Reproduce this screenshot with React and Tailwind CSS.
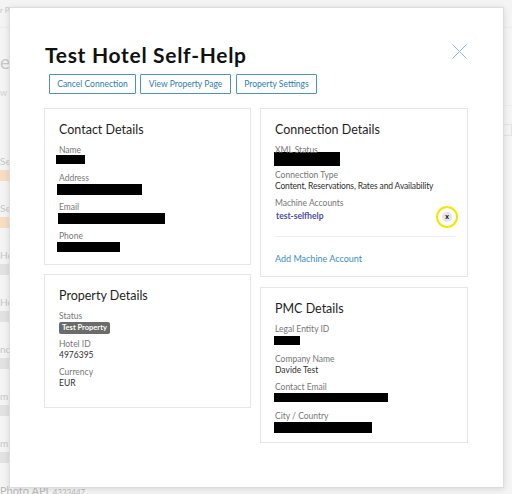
function Label({ children }) {
  return <div className="text-[8.5px] leading-[10px] text-[#767676]">{children}</div>;
}

function Field({ label, children }) {
  return (
    <div className="mb-[6px]">
      <Label>{label}</Label>
      <div className="h-[12px] text-[8.5px] leading-[12px] text-[#2e2e2e]">{children}</div>
    </div>
  );
}

function Redact({ className }) {
  return <div className={"bg-black " + className} />;
}

function Card({ title, className, children }) {
  return (
    <div className={"border border-[#e6e6e6] bg-white pl-[14px] pr-[12px] pt-[13px] " + className}>
      <h3 className="mb-[6.5px] text-[12.5px] leading-[16px] text-[#1e1e1e]">{title}</h3>
      {children}
    </div>
  );
}

function BgRow({ name, badge, orange }) {
  return (
    <div className="mb-[21px]">
      <div className="h-[12px] text-[10px] leading-[12px] text-[#c6c6c6]">{name}</div>
      <div
        className={
          "mt-[3px] flex h-[11px] w-[24px] items-center pl-[12px] text-[8px] text-white " +
          (orange ? "bg-[#f8dcc4]" : "bg-[#e2e2e2]")
        }
      >
        {badge}
      </div>
    </div>
  );
}

function Background() {
  return (
    <div className="flex h-full w-full">
      <div className="w-[40px] overflow-hidden">
        <div className="mt-[5px] text-[8px] leading-[10px] text-[#c4c4c4]">r P</div>
        <div className="mt-[12px] border-t border-[#ececec]" />
        <div className="mt-[24px] text-[19px] leading-[20px] text-[#c9c9c9]">es</div>
        <div className="mt-[16px] text-[9px] leading-[10px] text-[#d0d0d0]">w</div>
        <div className="mt-[57px]">
          <BgRow name="Sel" badge="P" orange />
          <BgRow name="Sel" badge="P" orange />
          <BgRow name="Ho" badge="X" />
          <BgRow name="Ho" badge="X" />
          <BgRow name="nc" badge="X" />
          <BgRow name="m" badge="X" />
          <BgRow name="m" badge="X" />
        </div>
      </div>
      <div className="ml-auto w-[40px] overflow-hidden">
        <div className="mt-[27px] border-t border-[#ececec]" />
        <div className="mt-[77px] border-t border-[#ececec]" />
        <div className="ml-[2px] mt-[18px] h-[12px] border border-[#e4e4e4] pl-[1px] text-[8px] leading-[10px] text-[#c4c4c4]">
          e C
        </div>
      </div>
    </div>
  );
}

export default function App() {
  return (
    <div className="relative h-[494px] w-[512px] overflow-hidden bg-[#f4f4f4] font-['Lato',sans-serif]">
      <Background />

      <div className="absolute left-0 top-[483px] whitespace-nowrap leading-[11px] text-[#b9b9b9]">
        <span className="text-[11px]">Photo API</span>{" "}
        <span className="text-[8px]">4333447</span>
      </div>

      {/* modal */}
      <div className="absolute left-[9px] top-[7px] h-[481px] w-[495px] border border-[#dddddd] bg-white pl-[34px] pr-[34px] pt-[34px] shadow-[0_1px_6px_rgba(0,0,0,0.12)]">
        <div className="mr-[2px] flex h-[26px] items-start justify-between">
          <h1 className="ml-px text-[21px] font-bold leading-[26px] tracking-[0.7px] text-[#111]">
            Test Hotel Self-Help
          </h1>
          <svg className="mt-[2px] h-[15px] w-[15px]" viewBox="0 0 15 15" fill="none">
            <path d="M0.5 0.5 L14.5 14.5 M14.5 0.5 L0.5 14.5" stroke="#8dbcd8" strokeWidth="1" />
          </svg>
        </div>

        <div className="ml-[5px] mt-[6px] flex gap-[4px] text-[8.5px] text-[#2d7dab]">
          <button className="h-[20px] w-[87px] rounded-[1px] border border-[#4f93b6]">Cancel Connection</button>
          <button className="h-[20px] w-[91px] rounded-[1px] border border-[#4f93b6]">View Property Page</button>
          <button className="ml-px h-[20px] w-[81px] rounded-[1px] border border-[#4f93b6]">Property Settings</button>
        </div>

        <div className="mt-[14px] flex gap-[9px]">
          <div className="flex w-[207px] flex-col gap-[9px]">
            <Card title="Contact Details" className="h-[157px]">
              <Field label="Name">
                <Redact className="-ml-[3px] h-[9px] w-[29px]" />
              </Field>
              <Field label="Address">
                <Redact className="-ml-[2px] mt-[1px] h-[11px] w-[85px]" />
              </Field>
              <Field label="Email">
                <Redact className="-ml-[1px] mt-[1px] h-[11px] w-[107px]" />
              </Field>
              <Field label="Phone">
                <Redact className="-ml-[2px] mt-[1px] h-[10px] w-[63px]" />
              </Field>
            </Card>

            <Card title="Property Details" className="h-[134px]">
              <Field label="Status">
                <span className="inline-block h-[12px] rounded-[2px] bg-[#6b6b6b] px-[3px] text-[7.5px] font-bold leading-[12px] text-white">
                  Test Property
                </span>
              </Field>
              <Field label="Hotel ID">4976395</Field>
              <Field label="Currency">EUR</Field>
            </Card>
          </div>

          <div className="flex w-[208px] flex-col gap-[10px]">
            <Card title="Connection Details" className="h-[169px]">
              <Field label="XML Status">
                <Redact className="-ml-[1px] -mt-[3px] h-[14px] w-[66px]" />
              </Field>
              <Field label="Connection Type">
                <span className="tracking-[-0.15px]">Content, Reservations, Rates and Availability</span>
              </Field>
              <Label>Machine Accounts</Label>
              <div className="-mt-[2px] flex h-[22px] items-center justify-between">
                <span className="ml-px text-[8.5px] font-bold text-[#4b4ba3]">test-selfhelp</span>
                <span className="-mr-[3px] flex h-[22px] w-[22px] items-center justify-center rounded-full border-[2.5px] border-[#f4e600]">
                  <span className="flex h-[10px] w-[10px] items-center justify-center rounded-full bg-[#e4e4e4] text-[7px] font-bold leading-none text-black">
                    x
                  </span>
                </span>
              </div>
              <div className="mt-[8px] border-t border-[#ececec]" />
              <div className="mt-[16px] text-[9px] leading-[12px] text-[#3b8dc4]">Add Machine Account</div>
            </Card>

            <Card title="PMC Details" className="h-[156px]">
              <Field label="Legal Entity ID">
                <Redact className="-ml-[1px] mt-[2px] h-[9px] w-[26px]" />
              </Field>
              <Field label="Company Name">Davide Test</Field>
              <Field label="Contact Email">
                <Redact className="-ml-[1px] mt-[1px] h-[9px] w-[114px]" />
              </Field>
              <Field label="City / Country">
                <Redact className="-ml-[1px] mt-[1px] h-[11px] w-[98px]" />
              </Field>
            </Card>
          </div>
        </div>
      </div>
    </div>
  );
}
